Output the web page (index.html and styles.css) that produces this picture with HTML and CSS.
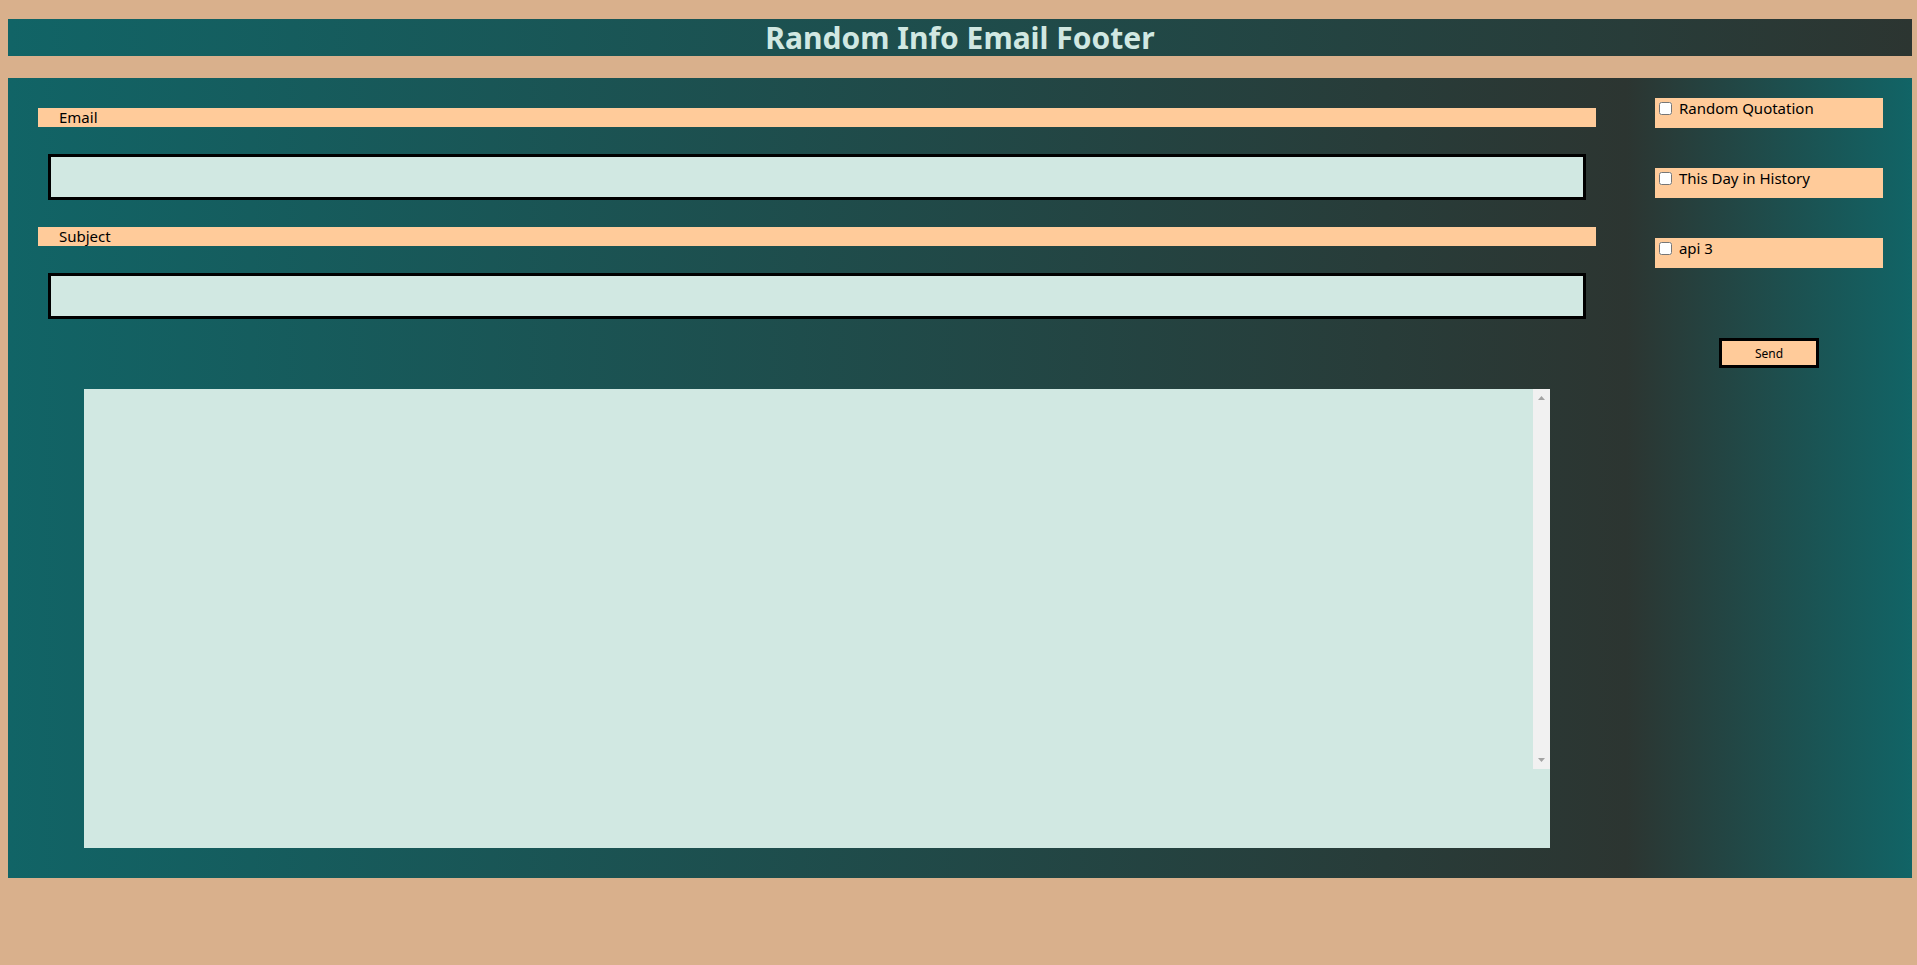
FILE: index.html
```html
<!DOCTYPE html>
<html lang="en">
<head>
<meta charset="utf-8">
<title>Random Info Email Footer</title>
<link rel="stylesheet" href="styles.css">
</head>
<body>
<header class="top">
  <h1 class="title">Random Info Email Footer</h1>
</header>
<main class="panel">
  <section class="fields">
    <label class="field-label" for="email">Email</label>
    <input class="field-input" id="email" type="text">
    <label class="field-label" for="subject">Subject</label>
    <input class="field-input" id="subject" type="text">
    <div class="message">
      <textarea class="message-text"></textarea>
      <div class="scrollbar">
        <svg class="arrow" width="17" height="17" viewBox="0 0 17 17"><path d="M5 11h7L8.5 7z" fill="#a3a3a3"/></svg>
        <svg class="arrow" width="17" height="17" viewBox="0 0 17 17"><path d="M5 6h7L8.5 10z" fill="#a3a3a3"/></svg>
      </div>
    </div>
  </section>
  <aside class="options">
    <div class="option"><input class="check" type="checkbox" id="o1"> <label for="o1">Random Quotation</label></div>
    <div class="option"><input class="check" type="checkbox" id="o2"> <label for="o2">This Day in History</label></div>
    <div class="option"><input class="check" type="checkbox" id="o3"> <label for="o3">api 3</label></div>
    <button class="send" type="button">Send</button>
  </aside>
</main>
</body>
</html>
```
FILE: styles.css
```css
html, body {
  margin: 0;
}
body {
  padding: 19px 5px 0 8px;
  background: #D9B08C;
  font-family: "Noto Sans", "Open Sans", sans-serif;
  min-height: 965px;
  box-sizing: border-box;
}
.top {
  height: 37px;
  background: linear-gradient(to right, #116466, #2C3531);
  text-align: center;
}
.title {
  margin: 0;
  font-size: 30px;
  line-height: 37px;
  font-weight: 700;
  color: #D1E8E2;
}
.panel {
  margin-top: 22px;
  height: 800px;
  box-sizing: border-box;
  padding: 20px 29px 30px 30px;
  background: linear-gradient(to right, #116466 0%, #2C3531 85%, #116466 100%);
  display: flex;
  gap: 59px;
}
.fields {
  width: 1558px;
  padding-top: 10px;
  display: flex;
  flex-direction: column;
}
.field-label {
  display: block;
  height: 19px;
  line-height: 19px;
  padding-left: 21px;
  background: #FFCB9A;
  font-size: 15px;
  color: #000;
}
.field-input {
  display: block;
  box-sizing: border-box;
  margin: 27px 10px 27px 10px;
  height: 46px;
  border: 3px solid #000;
  background: #D1E8E2;
  padding: 0 6px;
  outline: none;
}
.message {
  margin: 43px 46px 0 46px;
  height: 459px;
  background: #D1E8E2;
  display: flex;
  align-items: flex-start;
}
.message-text {
  flex: 1;
  height: 100%;
  border: none;
  background: transparent;
  resize: none;
  outline: none;
  margin: 0;
  padding: 2px;
  box-sizing: border-box;
}
.scrollbar {
  width: 17px;
  height: 380px;
  background: #f1f1f1;
  display: flex;
  flex-direction: column;
  justify-content: space-between;
}
.arrow {
  display: block;
}
.options {
  width: 228px;
  display: flex;
  flex-direction: column;
  gap: 40px;
}
.option {
  height: 30px;
  box-sizing: border-box;
  padding-top: 1px;
  background: #FFCB9A;
  font-size: 15px;
  line-height: 19px;
  color: #000;
}
.check {
  width: 13px;
  height: 13px;
  margin: 3px 3px 3px 4px;
  vertical-align: -1px;
}
.send {
  margin: 30px auto 0;
  width: 100px;
  height: 30px;
  box-sizing: border-box;
  border: 3px solid #000;
  background: #FFCB9A;
  font-family: "Noto Sans", sans-serif;
  font-size: 12px;
  color: #000;
  padding: 0;
}
```
